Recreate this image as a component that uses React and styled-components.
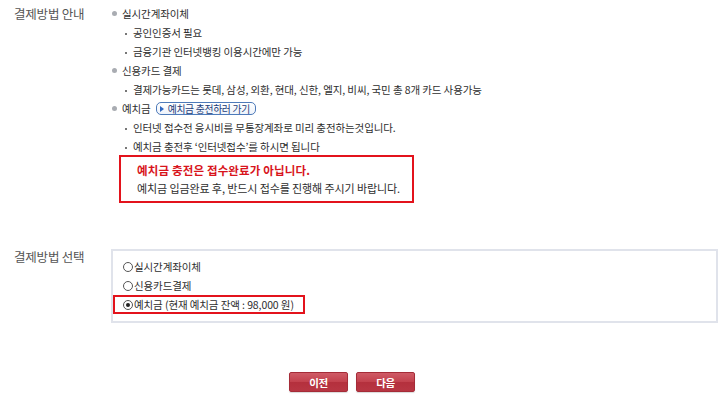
import React from "react";
import styled, { createGlobalStyle } from "styled-components";

const Global = createGlobalStyle`
  html, body { margin: 0; padding: 0; background: #fff; }
  body {
    font-family: "Noto Sans CJK KR", "Noto Sans", sans-serif;
    color: #333;
    width: 720px;
    height: 401px;
    overflow: hidden;
  }
`;

const Page = styled.div`
  padding-top: 4px;
  display: flex;
  flex-direction: column;
`;

const Section = styled.section`
  display: flex;
  margin-top: ${(p) => p.$top || 0}px;
`;

const Label = styled.div`
  width: 111px;
  flex: none;
  box-sizing: border-box;
  padding-left: 14px;
  font-size: 12.5px;
  letter-spacing: -0.2px;
  color: #555;
  line-height: ${(p) => p.$lh || 19}px;
`;

const Content = styled.div`
  display: flex;
  flex-direction: column;
`;

const List = styled.ul`
  list-style: none;
  margin: 0;
  padding: 0;
`;

const Item = styled.li`
  display: flex;
  align-items: center;
  height: 19px;
  font-size: 10.5px;
  letter-spacing: -0.1px;
  color: #2e2e2e;
  white-space: nowrap;
`;

const Dot = styled.span`
  flex: none;
  width: 5px;
  height: 5px;
  border-radius: 50%;
  background: #a9acb2;
  margin-left: 1px;
  margin-right: 5px;
`;

const SubDot = styled.span`
  flex: none;
  width: 2px;
  height: 2px;
  background: #777;
  margin-left: 14px;
  margin-right: 6px;
  margin-top: 3px;
`;

const Pill = styled.span`
  display: inline-flex;
  align-items: center;
  box-sizing: border-box;
  height: 13px;
  width: 100px;
  margin-left: 5px;
  border: 1px solid #4d7ab9;
  border-radius: 5px;
  background: linear-gradient(#ffffff, #eef3fb);
  color: #1d3c78;
  font-size: 9.8px;
  letter-spacing: -0.3px;
  padding-left: 3px;
`;

const Tri = styled.span`
  width: 0;
  height: 0;
  border-top: 3px solid transparent;
  border-bottom: 3px solid transparent;
  border-left: 4px solid #2f67c0;
  margin-right: 4px;
`;

const Notice = styled.div`
  box-sizing: border-box;
  width: 295px;
  height: 48px;
  margin-left: 8px;
  margin-top: -1px;
  border: 2px solid #e3131c;
  padding: 4px 0 0 16px;
`;

const NoticeTitle = styled.div`
  color: #d8141c;
  font-weight: bold;
  font-size: 11.5px;
  letter-spacing: 0.15px;
  line-height: 18px;
  white-space: nowrap;
`;

const NoticeText = styled.div`
  color: #2e2e2e;
  font-size: 11px;
  letter-spacing: -0.1px;
  line-height: 18px;
  white-space: nowrap;
`;

const ChoiceBox = styled.div`
  box-sizing: border-box;
  width: 607px;
  height: 74px;
  border: 2px solid #e0e3eb;
  padding-top: 6px;
  display: flex;
  flex-direction: column;
`;

const Choice = styled.label`
  box-sizing: border-box;
  display: flex;
  align-items: center;
  height: 19px;
  width: ${(p) => (p.$marked ? "192px" : "auto")};
  padding-left: ${(p) => (p.$marked ? 8 : 10)}px;
  border: ${(p) => (p.$marked ? "2px solid #e3131c" : "none")};
  font-size: 10.5px;
  letter-spacing: -0.1px;
  color: #2e2e2e;
  white-space: nowrap;
`;

const Radio = styled.span`
  flex: none;
  box-sizing: border-box;
  width: 10px;
  height: 10px;
  border-radius: 50%;
  border: 1px solid #555;
  background: #fff;
  margin-right: 1px;
  display: flex;
  align-items: center;
  justify-content: center;
  &::after {
    content: "";
    display: ${(p) => (p.$checked ? "block" : "none")};
    width: 4px;
    height: 4px;
    border-radius: 50%;
    background: #222;
  }
`;

const Footer = styled.div`
  width: 704px;
  display: flex;
  justify-content: center;
  gap: 8px;
  margin-top: 49px;
`;

const Button = styled.button`
  box-sizing: border-box;
  width: 59px;
  height: 20px;
  border: 1px solid #a52c38;
  border-radius: 2px;
  background: linear-gradient(#cf5b66 0%, #c2414d 50%, #b4303d 51%, #b83643 100%);
  color: #fff;
  font-family: "Noto Sans CJK KR", sans-serif;
  font-weight: bold;
  font-size: 10.5px;
  letter-spacing: -0.5px;
  padding: 0;
  box-shadow: 0 1px 1px rgba(0,0,0,0.15);
`;

export default function App() {
  return (
    <>
      <Global />
      <Page>
        <Section>
          <Label>결제방법 안내</Label>
          <Content>
            <List>
              <Item><Dot />실시간계좌이체</Item>
              <Item><SubDot />공인인증서 필요</Item>
              <Item><SubDot />금융기관 인터넷뱅킹 이용시간에만 가능</Item>
              <Item><Dot />신용카드 결제</Item>
              <Item><SubDot />결제가능카드는 롯데, 삼성, 외환, 현대, 신한, 엘지, 비씨, 국민 총 8개 카드 사용가능</Item>
              <Item>
                <Dot />예치금
                <Pill><Tri />예치금 충전하러 가기</Pill>
              </Item>
              <Item><SubDot />인터넷 접수전 응시비를 무통장계좌로 미리 충전하는것입니다.</Item>
              <Item><SubDot />예치금 충전후 ‘인터넷접수’를 하시면 됩니다</Item>
            </List>
            <Notice>
              <NoticeTitle>예치금 충전은 접수완료가 아닙니다.</NoticeTitle>
              <NoticeText>예치금 입금완료 후, 반드시 접수를 진행해 주시기 바랍니다.</NoticeText>
            </Notice>
          </Content>
        </Section>
        <Section $top={46}>
          <Label $lh={15}>결제방법 선택</Label>
          <ChoiceBox>
            <Choice><Radio />실시간계좌이체</Choice>
            <Choice><Radio />신용카드결제</Choice>
            <Choice $marked><Radio $checked />예치금 (현재 예치금 잔액 : 98,000 원)</Choice>
          </ChoiceBox>
        </Section>
        <Footer>
          <Button>이전</Button>
          <Button>다음</Button>
        </Footer>
      </Page>
    </>
  );
}
